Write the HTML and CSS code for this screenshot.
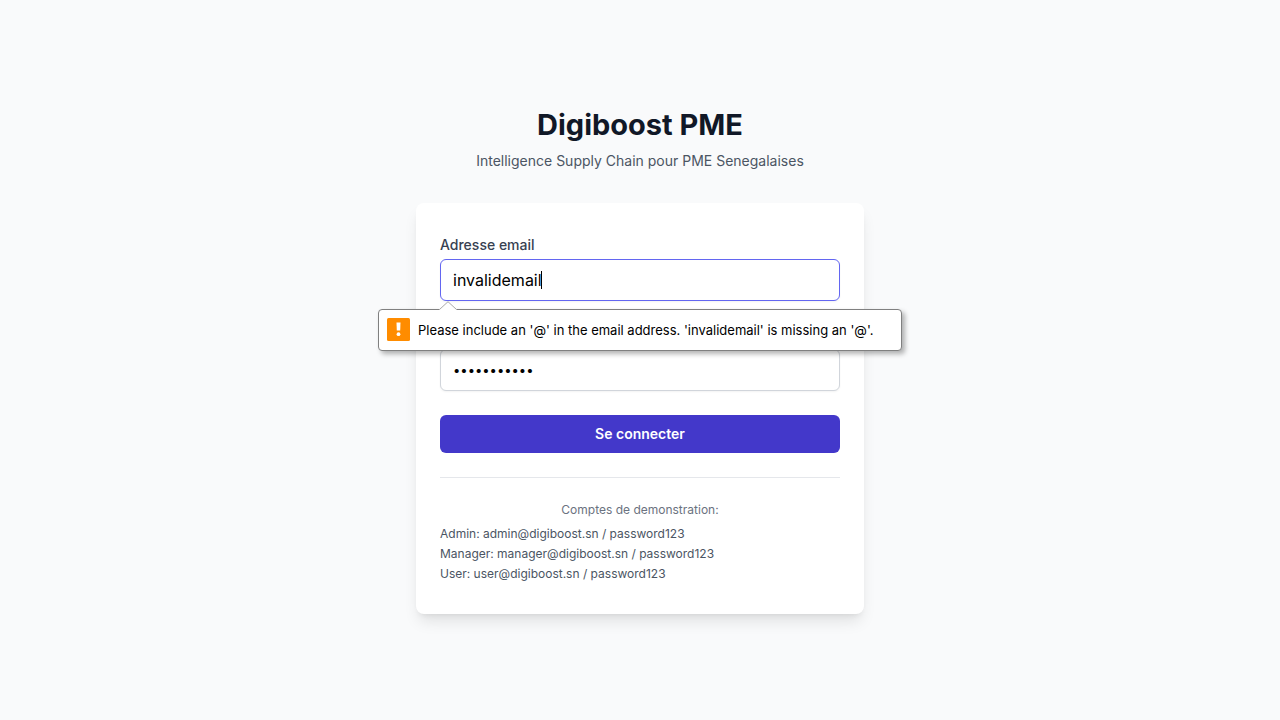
FILE: index.html
```html
<!DOCTYPE html>
<html lang="fr">
<head>
<meta charset="utf-8">
<meta name="viewport" content="width=device-width, initial-scale=1">
<title>Digiboost PME</title>
<link rel="stylesheet" href="styles.css">
</head>
<body>
<main class="login">
  <header class="login-header">
    <h1 class="title">Digiboost PME</h1>
    <p class="subtitle">Intelligence Supply Chain pour PME Senegalaises</p>
  </header>
  <section class="card">
    <form class="form" novalidate>
      <div class="field">
        <label class="label" for="email">Adresse email</label>
        <div class="control">
          <input class="input input-active" id="email" type="email" value="invalidemail" aria-describedby="email-error">
          <span class="caret" aria-hidden="true"></span>
          <div class="bubble" id="email-error" role="alert">
            <svg class="bubble-arrow" width="18" height="9" viewBox="0 0 18 9" aria-hidden="true">
              <path d="M0 9L9 0.7L18 9Z" fill="#fff"/>
              <path d="M0.5 8.5L9 0.7L17.5 8.5" fill="none" stroke="#a8a8a8"/>
            </svg>
            <svg class="bubble-icon" width="23" height="23" viewBox="0 0 23 23" aria-hidden="true">
              <rect width="23" height="23" rx="1.5" fill="#ff8c00"/>
              <path d="M9.5 4.5h4l-0.3 8h-3.4z" fill="#fff"/>
              <circle cx="11.5" cy="16.2" r="1.9" fill="#fff"/>
            </svg>
            <span>Please include an '@' in the email address. 'invalidemail' is missing an '@'.</span>
          </div>
        </div>
      </div>
      <div class="field">
        <label class="label label-covered" for="password">Mot de passe</label>
        <input class="input input-password" id="password" type="password" value="password123">
      </div>
      <button class="submit" type="submit">Se connecter</button>
    </form>
    <div class="demo">
      <p class="demo-title">Comptes de demonstration:</p>
      <p>Admin: admin@digiboost.sn / password123</p>
      <p>Manager: manager@digiboost.sn / password123</p>
      <p>User: user@digiboost.sn / password123</p>
    </div>
  </section>
</main>
</body>
</html>
```
FILE: styles.css
```css
* {
  box-sizing: border-box;
  margin: 0;
}

body {
  min-height: 100vh;
  display: flex;
  align-items: center;
  justify-content: center;
  background: #f9fafb;
  font-family: Inter, "Liberation Sans", sans-serif;
  font-size: 14px;
  line-height: 20px;
}

.login {
  width: 100%;
  max-width: 448px;
  display: flex;
  flex-direction: column;
  gap: 32px;
}

.login-header {
  display: flex;
  flex-direction: column;
  gap: 8px;
  text-align: center;
}

.title {
  color: #111827;
  font-size: 29px;
  line-height: 36px;
  font-weight: 700;
}

.subtitle {
  color: #4b5563;
}

.card {
  padding: 32px 24px;
  border-radius: 8px;
  background: #fff;
  box-shadow: 0 10px 15px -3px rgba(0, 0, 0, 0.1), 0 4px 6px -4px rgba(0, 0, 0, 0.1);
}

.form {
  display: flex;
  flex-direction: column;
  gap: 24px;
}

.field {
  display: flex;
  flex-direction: column;
  gap: 4px;
}

.label {
  color: #374151;
  font-weight: 500;
}

/* The validation bubble lies over this label. */
.label-covered {
  visibility: hidden;
}

.control {
  position: relative;
  display: flex;
}

.input {
  width: 100%;
  padding: 8px 12px;
  border: 1px solid #d1d5db;
  border-radius: 6px;
  background: #fff;
  box-shadow: 0 1px 2px rgba(0, 0, 0, 0.05);
  color: #000;
  font: inherit;
  font-size: 16px;
  line-height: 24px;
  height: 42px;
  outline: none;
}

.input-active {
  border-color: #6366f1;
}

.input-password {
  font-size: 13px;
}

.caret {
  position: absolute;
  top: 12px;
  left: 101px;
  width: 1px;
  height: 18px;
  background: #000;
}

.bubble {
  position: absolute;
  z-index: 1;
  top: 50px;
  left: -62px;
  min-width: 524px;
  height: 42px;
  display: flex;
  align-items: center;
  gap: 8px;
  padding: 0 8px;
  border: 1px solid #808080;
  border-radius: 4px;
  background: #fff;
  box-shadow: 3px 3px 5px rgba(0, 0, 0, 0.3);
  color: #000;
  font-size: 13px;
  white-space: nowrap;
}

.bubble-arrow {
  position: absolute;
  top: -9px;
  left: 60px;
}

.bubble-icon {
  flex: none;
}

.submit {
  padding: 8px 16px;
  border: 1px solid transparent;
  border-radius: 6px;
  background: #4338ca;
  color: #fff;
  font: inherit;
  font-weight: 600;
}

.demo {
  display: flex;
  flex-direction: column;
  gap: 4px;
  margin-top: 24px;
  padding-top: 24px;
  border-top: 1px solid #e5e7eb;
  color: #4b5563;
  font-size: 12px;
  line-height: 16px;
}

.demo-title {
  margin-bottom: 4px;
  color: #6b7280;
  text-align: center;
}
```
